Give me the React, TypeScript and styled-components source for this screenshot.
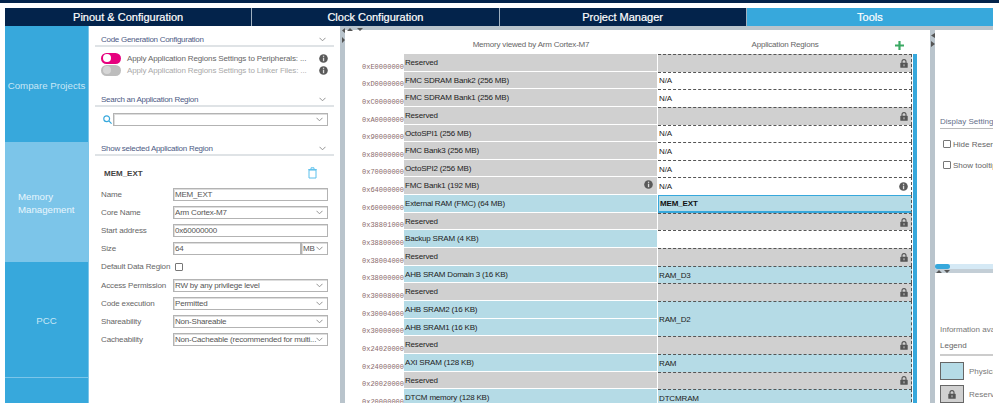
import React from "react";
import styled, { createGlobalStyle } from "styled-components";

const Global = createGlobalStyle`
  html, body { margin: 0; padding: 0; background: #fff; height: 403px; overflow: hidden; }
  #root { height: 403px; }
  * { box-sizing: border-box; }
`;

const Page = styled.div`
  width: 999px; height: 403px; overflow: hidden; display: flex; flex-direction: column;
  font-family: "Liberation Sans", Arial, sans-serif; color: #555; font-size: 8.5px;
`;
const TopEdge = styled.div`height: 3px; background: #03234b; flex: none; margin-bottom: 5px;`;
const Tabs = styled.div`display: flex; height: 18px; margin: 0 6px 0 5px; flex: none;`;
const Tab = styled.div<{ $active?: boolean }>`
  flex: 1; display: flex; align-items: center; justify-content: center;
  background: ${p => (p.$active ? "#37a8dc" : "#03234b")}; color: #fff;
  font-size: 11px; -webkit-text-stroke: .2px #fff; border-right: 1px solid #9fb0c0;
  &:last-child { border-right: 0; }
`;
const Body = styled.div`flex: 1; display: flex; min-height: 0; padding-left: 5px;`;
const Sidebar = styled.nav`width: 84px; flex: none; display: flex; flex-direction: column;`;
const SideItem = styled.div<{ $h: number; $active?: boolean }>`
  height: ${p => p.$h}px; flex: none; display: flex; align-items: center; white-space: nowrap;
  padding: 2px 2px 0 ${p => (p.$active ? "13px" : "2px")}; line-height: 13px;
  justify-content: ${p => (p.$active ? "flex-start" : "center")};
  background: ${p => (p.$active ? "#7cc5e9" : "#37a8dc")};
  border-bottom: 1px solid #7cc5e9; border-right: 1px solid #7cc5e9;
  color: ${p => (p.$active ? "#e8f6fd" : "#c8e7f6")}; font-size: 9.7px; text-align: left;
`;
const LeftPanel = styled.section`width: 251px; flex: none; padding: 4px 6px 0 6px;`;
const SectionHead = styled.div`
  display: flex; justify-content: space-between; align-items: center;
  height: 17px; padding: 3px 8px 0 6px; letter-spacing: -.28px;
  border-bottom: 2px solid #dfe3e6; color: #4d5b85; font-size: 8px;
`;
const ToggleRow = styled.div<{ $off?: boolean }>`
  display: flex; align-items: center; height: 12px; padding-left: 6px; letter-spacing: -.13px;
  color: ${p => (p.$off ? "#aaa" : "#666")}; font-size: 8px; white-space: nowrap;
`;
const ToggleList = styled.div`margin-top: 5px; margin-bottom: 14px;`;
const Track = styled.span<{ $off?: boolean }>`
  width: 20px; height: 11px; border-radius: 6px; flex: none; margin-right: 6px; display: flex; align-items: center;
  padding-left: 2px; background: ${p => (p.$off ? "#bdbdbd" : "#e6007e")};
  &::after { content: ""; width: 8px; height: 8px; border-radius: 50%; background: ${p => (p.$off ? "#d6d6d6" : "#fff")}; }
`;
const ToggleText = styled.span`flex: 1;`;
const InfoWrap = styled.span`display: flex; margin-right: 6px;`;
const SearchRow = styled.div`display: flex; align-items: center; gap: 1px; padding: 6px 6px 0 8px; margin-bottom: 13px;`;
const Field = styled.div<{ $w?: number }>`
  flex: ${p => (p.$w ? "none" : "1")}; width: ${p => (p.$w ? p.$w + "px" : "auto")};
  height: 13px; border: 1px solid #b3b3b3; box-shadow: inset 1px 1px 0 #ddd; background: #fff;
  display: flex; align-items: center; justify-content: space-between; padding: 0 4px 0 1px;
  color: #555; font-size: 8px; letter-spacing: -.2px; white-space: nowrap; overflow: hidden;
`;
const RegionHead = styled.div`
  display: flex; justify-content: space-between; align-items: center;
  padding: 10px 17px 0 9px; height: 24px; color: #444; font-weight: 700; font-size: 8px;
`;
const FormRows = styled.div`display: flex; flex-direction: column; padding: 0 6px; margin-top: 5px;`;
const FormRow = styled.div`
  display: flex; align-items: center; height: 18.2px; color: #666; font-size: 8px;
`;
const Label = styled.span`width: 72px; flex: none; white-space: nowrap; letter-spacing: -.15px;`;
const Check = styled.span<{ $ml?: number }>`
  width: 8px; height: 8px; border: 1px solid #777; border-radius: 1px; display: block;
  margin-left: ${p => p.$ml ?? 0}px; background: #fff; flex: none;
`;
const Splitter = styled.div`width: 5px; flex: none; background: #b9c4cc; position: relative;`;
const Arrows = styled.svg`position: absolute; left: 0; top: 0; overflow: visible;`;
const Center = styled.section`width: 585px; flex: none; display: flex; flex-direction: column;`;
const Band = styled.div`height: 4px; background: #b9c4cc; flex: none;`;
const MemHead = styled.div`
  display: grid; grid-template-columns: 59px 254px 254px; width: 567px; height: 24px; flex: none; position: relative;
  padding-top: 10px; color: #666; font-size: 8px; letter-spacing: -.2px; text-align: center;
`;
const PlusWrap = styled.span`position: absolute; left: 550px; top: 11px; display: flex;`;
const MemGrid = styled.div`
  display: grid; grid-template-columns: 59px 254px 254px; grid-auto-rows: 17.65px; position: relative; width: 567px; flex: none;
`;
const Bar = styled.div`position: absolute; left: 568px; top: 0; width: 4px; bottom: 0; background: #37a8dc;`;
const Addr = styled.div`
  align-self: end; text-align: right; font-family: "Liberation Mono", monospace; font-size: 7px; color: #8a6a6a; line-height: 9px;
`;
const Phys = styled.div<{ $c: string }>`
  background: ${p => p.$c}; border-bottom: 1px solid #fff; color: #222; font-size: 8px; letter-spacing: -.19px;
  display: flex; justify-content: space-between; align-items: flex-start; padding: 3px 4px 0 1px; margin-right: 1px; line-height: 11px;
`;
const Region = styled.div<{ $c: string; $span?: number; $sel?: boolean }>`
  grid-row: span ${p => p.$span ?? 1}; background: ${p => p.$c}; color: ${p => (p.$sel ? "#111" : "#222")};
  font-weight: ${p => (p.$sel ? 700 : 400)}; font-size: 8px; letter-spacing: -.15px;
  border-top: ${p => (p.$sel ? "1px solid #37a8dc" : "1px dashed #555")};
  border-bottom: ${p => (p.$sel ? "2px solid #37a8dc" : "0")};
  border-left: ${p => (p.$sel ? "1px solid #37a8dc" : "0")};
  border-right: 1px dashed #555;
  display: flex; align-items: center; justify-content: space-between; padding: 0 3px 0 1px;
`;
const Right = styled.aside`width: 58px; flex: none; overflow: hidden; display: flex; flex-direction: column; white-space: nowrap;`;
const DisplayHead = styled.div`
  margin: 87px 0 0 5px; width: 100px; color: #66708a; font-size: 8px; height: 12px; flex: none; border-bottom: 1px solid #bbb;
`;
const RightOpt = styled.div<{ $mt: number }>`
  display: flex; align-items: center; gap: 2px; margin: ${p => p.$mt}px 0 0 8px; color: #666; font-size: 8px; height: 10px; flex: none;
`;
const HSplit = styled.div`height: 9px; margin-top: 94px; background: linear-gradient(#d5e9f5 0 5px, #c3ced6 5px); position: relative; flex: none;`;
const Thumb = styled.span`position: absolute; left: 0; top: 0; width: 15px; height: 5px; border-radius: 3px; background: #37a8dc;`;
const HArrows = styled.svg`position: absolute; left: 1px; top: 6px;`;
const InfoText = styled.div`margin: 52px 0 0 5px; color: #777; font-size: 8px; height: 10px; flex: none;`;
const LegendHead = styled.div`margin: 5px 0 0 5px; height: 16px; flex: none; padding-top: 1px; color: #666; font-size: 8px; border-bottom: 2px solid #ccc;`;
const LegendRow = styled.div<{ $mt: number }>`display: flex; flex: none; align-items: center; gap: 5px; margin: ${p => p.$mt}px 0 0 5px; color: #777; font-size: 8px;`;
const Swatch = styled.div<{ $c: string; $h: number }>`
  width: 24px; height: ${p => p.$h}px; background: ${p => p.$c}; border: 1px solid #666; display: flex; align-items: center; justify-content: center; flex: none;
`;
const SearchSvg = styled.svg`flex: none;`;

const Chevron = () => (
  <svg width="7" height="5" viewBox="0 0 7 5" fill="none" stroke="#888" strokeWidth="0.9"><path d="M.5 .8 3.5 3.8 6.5 .8" /></svg>
);
const Info = ({ c = "#5a5a5a" }: { c?: string }) => (
  <svg width="9" height="9" viewBox="0 0 9 9"><circle cx="4.5" cy="4.5" r="4.3" fill={c} /><rect x="3.9" y="3.7" width="1.3" height="3.5" fill="#ddd" /><rect x="3.9" y="1.7" width="1.3" height="1.2" fill="#ddd" /></svg>
);
const Lock = () => (
  <svg width="8" height="9" viewBox="0 0 8 9"><path d="M2 4V2.6a2 2 0 0 1 4 0V4" fill="none" stroke="#555" strokeWidth="1.1" /><rect x=".3" y="3.8" width="7.4" height="5" rx=".6" fill="#555" /><rect x="3.5" y="5.3" width="1" height="2" fill="#ccc" /></svg>
);
const Trash = () => (
  <svg width="9" height="12" viewBox="0 0 9 12" fill="none" stroke="#5cc0ec" strokeWidth="1"><path d="M1 3h7v8H1zM.2 2.6h8.6M3 2.4V.8h3v1.6" /></svg>
);
const Plus = () => (
  <svg width="9" height="9" viewBox="0 0 9 9"><path d="M3.4 0h2.2v3.4H9v2.2H5.6V9H3.4V5.6H0V3.4h3.4z" fill="#3aa963" /></svg>
);
const SearchIcon = () => (
  <SearchSvg width="9" height="9" viewBox="0 0 9 9" fill="none" stroke="#37a8dc" strokeWidth="1.2"><circle cx="3.7" cy="3.7" r="2.9" /><path d="M5.8 5.8 8.6 8.6" /></SearchSvg>
);

type Row = { a: string; l: string; r?: string; span?: number; phys?: boolean; pi?: boolean; ri?: boolean; lock?: boolean; white?: boolean; sel?: boolean; skip?: boolean };
const GRAY = "#d0d0d0", BLUE = "#b5dbe6";
const rows: Row[] = [
  { a: "0xE0000000", l: "Reserved", lock: true },
  { a: "0xD0000000", l: "FMC SDRAM Bank2 (256 MB)", r: "N/A", white: true },
  { a: "0xC0000000", l: "FMC SDRAM Bank1 (256 MB)", r: "N/A", white: true },
  { a: "0xA0000000", l: "Reserved", lock: true },
  { a: "0x90000000", l: "OctoSPI1 (256 MB)", r: "N/A", white: true },
  { a: "0x80000000", l: "FMC Bank3 (256 MB)", r: "N/A", white: true },
  { a: "0x70000000", l: "OctoSPI2 (256 MB)", r: "N/A", white: true },
  { a: "0x64000000", l: "FMC Bank1 (192 MB)", r: "N/A", white: true, pi: true, ri: true },
  { a: "0x60000000", l: "External RAM (FMC) (64 MB)", r: "MEM_EXT", phys: true, sel: true },
  { a: "0x38801000", l: "Reserved", lock: true },
  { a: "0x38800000", l: "Backup SRAM (4 KB)", r: "", phys: true, white: true },
  { a: "0x38004000", l: "Reserved", lock: true },
  { a: "0x38000000", l: "AHB SRAM Domain 3 (16 KB)", r: "RAM_D3", phys: true },
  { a: "0x30008000", l: "Reserved", lock: true },
  { a: "0x30004000", l: "AHB SRAM2 (16 KB)", r: "RAM_D2", span: 2, phys: true },
  { a: "0x30000000", l: "AHB SRAM1 (16 KB)", phys: true, skip: true },
  { a: "0x24020000", l: "Reserved", lock: true },
  { a: "0x24000000", l: "AXI SRAM (128 KB)", r: "RAM", phys: true },
  { a: "0x20020000", l: "Reserved", lock: true },
  { a: "0x20000000", l: "DTCM memory (128 KB)", r: "DTCMRAM", phys: true },
];

const selects = [
  ["Access Permission", "RW by any privilege level"],
  ["Code execution", "Permitted"],
  ["Shareability", "Non-Shareable"],
  ["Cacheability", "Non-Cacheable (recommended for multi..."],
];

export default function App() {
  return (
    <Page>
      <Global />
      <TopEdge />
      <Tabs>
        <Tab>Pinout &amp; Configuration</Tab>
        <Tab>Clock Configuration</Tab>
        <Tab>Project Manager</Tab>
        <Tab $active>Tools</Tab>
      </Tabs>
      <Body>
        <Sidebar>
          <SideItem $h={117}>Compare Projects</SideItem>
          <SideItem $h={119} $active>Memory<br />Management</SideItem>
          <SideItem $h={116}>PCC</SideItem>
          <SideItem $h={40} />
        </Sidebar>
        <LeftPanel>
          <SectionHead>Code Generation Configuration<Chevron /></SectionHead>
          <ToggleList>
            <ToggleRow><Track /><ToggleText>Apply Application Regions Settings to Peripherals: ...</ToggleText><InfoWrap><Info /></InfoWrap></ToggleRow>
            <ToggleRow $off><Track $off /><ToggleText>Apply Application Regions Settings to Linker Files: ...</ToggleText><InfoWrap><Info /></InfoWrap></ToggleRow>
          </ToggleList>
          <SectionHead>Search an Application Region<Chevron /></SectionHead>
          <SearchRow><SearchIcon /><Field><span /><Chevron /></Field></SearchRow>
          <SectionHead>Show selected Application Region<Chevron /></SectionHead>
          <RegionHead>MEM_EXT<Trash /></RegionHead>
          <FormRows>
            <FormRow><Label>Name</Label><Field>MEM_EXT</Field></FormRow>
            <FormRow><Label>Core Name</Label><Field>Arm Cortex-M7<Chevron /></Field></FormRow>
            <FormRow><Label>Start address</Label><Field>0x60000000</Field></FormRow>
            <FormRow><Label>Size</Label><Field>64</Field><Field $w={27}>MB<Chevron /></Field></FormRow>
            <FormRow><Label>Default Data Region</Label><Check $ml={2} /></FormRow>
            {selects.map(([l, v]) => <FormRow key={l}><Label>{l}</Label><Field>{v}<Chevron /></Field></FormRow>)}
          </FormRows>
        </LeftPanel>
        <Splitter>
          <Arrows width="24" height="18" viewBox="0 0 24 18">
            <path d="M5 2v5L2 4.500zM7 5l3-3 3 3zM17 2h6l-3 3zM2 11v6l3-3z" fill="#555" />
          </Arrows>
        </Splitter>
        <Center>
          <Band />
          <MemHead>
            <span />
            <span>Memory viewed by Arm Cortex-M7</span>
            <span>Application Regions</span>
            <PlusWrap><Plus /></PlusWrap>
          </MemHead>
          <MemGrid>
            <Bar />
            {rows.map(r => (
              <React.Fragment key={r.a}>
                <Addr>{r.a}</Addr>
                <Phys $c={r.phys ? BLUE : GRAY}>{r.l}{r.pi && <Info />}</Phys>
                {!r.skip && (
                  <Region $c={r.white ? "#fff" : r.lock ? GRAY : BLUE} $span={r.span} $sel={r.sel}>
                    <span>{r.r ?? ""}</span>
                    {r.lock && <Lock />}
                    {r.ri && <Info />}
                  </Region>
                )}
              </React.Fragment>
            ))}
          </MemGrid>
        </Center>
        <Splitter>
          <Arrows width="5" height="22" viewBox="0 0 5 22">
            <path d="M5 7v5L1 9.500zM1 15v6l4-3z" fill="#555" />
          </Arrows>
        </Splitter>
        <Right>
          <Band />
          <DisplayHead>Display Settings</DisplayHead>
          <RightOpt $mt={10}><Check />Hide Reserved</RightOpt>
          <RightOpt $mt={11}><Check />Show tooltips</RightOpt>
          <HSplit>
            <Thumb />
            <HArrows width="16" height="3" viewBox="0 0 16 3"><path d="M0 3 3 0 6 3zM8 0h6l-3 3z" fill="#555" /></HArrows>
          </HSplit>
          <InfoText>Information available</InfoText>
          <LegendHead>Legend</LegendHead>
          <LegendRow $mt={6}><Swatch $c={BLUE} $h={18} />Physical</LegendRow>
          <LegendRow $mt={5}><Swatch $c={GRAY} $h={18}><Lock /></Swatch>Reserved</LegendRow>
        </Right>
      </Body>
    </Page>
  );
}
